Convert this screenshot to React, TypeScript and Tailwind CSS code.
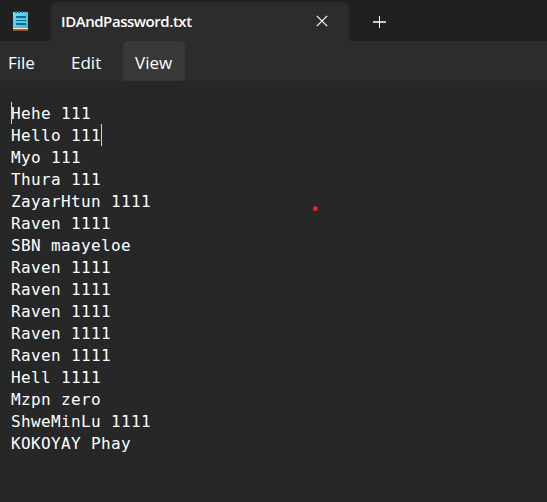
const lines = [
  'Hehe 111',
  'Hello 111',
  'Myo 111',
  'Thura 111',
  'ZayarHtun 1111',
  'Raven 1111',
  'SBN maayeloe',
  'Raven 1111',
  'Raven 1111',
  'Raven 1111',
  'Raven 1111',
  'Raven 1111',
  'Hell 1111',
  'Mzpn zero',
  'ShweMinLu 1111',
  'KOKOYAY Phay',
];

function NotepadIcon() {
  return (
    <svg width="16" height="21" viewBox="0 0 16 21" shapeRendering="crispEdges">
      <defs>
        <linearGradient id="paper" x1="0" y1="0" x2="1" y2="1">
          <stop offset="0" stopColor="#7fdcf5" />
          <stop offset="1" stopColor="#3fb4da" />
        </linearGradient>
      </defs>
      <rect x="0" y="18" width="15" height="2" fill="#b85a10" />
      <rect x="1" y="19" width="14" height="1" fill="#a04c0a" />
      <rect x="0" y="1" width="15" height="16" fill="url(#paper)" />
      <rect x="0" y="17" width="15" height="1" fill="#e8eef0" />
      <path d="M2 0h2v2h-2zM5 0h2v2h-2zM9 0h1v2h-1zM12 0h1v2h-1z" fill="#0c6a90" />
      <path d="M3 5h10v2h-10zM3 9h10v1h-10zM3 12h10v2h-10z" fill="#0a6d95" />
    </svg>
  );
}

function TitleBar() {
  return (
    <header className="flex h-[41px] bg-[#202020]">
      <div className="w-[51px] pl-[13px] pt-[11px]">
        <NotepadIcon />
      </div>
      <div className="relative mt-[2px] flex h-[39px] w-[298px] rounded-t-[8px] bg-[#2c2c2c]">
        <svg className="absolute -left-1 bottom-0" width="4" height="4">
          <path d="M4 0v4H0Q4 4 4 0" fill="#2c2c2c" />
        </svg>
        <svg className="absolute -right-1 bottom-0" width="4" height="4">
          <path d="M0 0v4H4Q0 4 0 0" fill="#2c2c2c" />
        </svg>
        <span className="ml-[10px] mt-[7px] w-[200px] font-['Open_Sans',sans-serif] text-[15px] font-semibold leading-[24px] tracking-[-0.45px] text-white">
          IDAndPassword.txt
        </span>
        <svg className="ml-[55px] mt-[13px]" width="12" height="12" viewBox="0 0 12 12">
          <path d="M.8.8l10.4 10.4M11.2.8L.8 11.2" stroke="#fff" strokeWidth="1.2" />
        </svg>
      </div>
      <svg className="ml-[24px] mt-[16px]" width="13" height="13" viewBox="0 0 13 13">
        <path d="M0 6h13" stroke="#c8c8c8" strokeWidth="2" />
        <path d="M6.5 0v12" stroke="#fff" strokeWidth="1" />
      </svg>
    </header>
  );
}

function MenuBar() {
  return (
    <nav className="flex h-[40px] bg-[#2c2c2c] font-['Open_Sans',sans-serif] text-[17px] leading-[43px] text-white">
      <span className="w-[71px] pl-[8px]">File</span>
      <span className="w-[52px]">Edit</span>
      <span className="w-[62px] rounded-[5px] bg-[#383838] pl-[12px]">View</span>
    </nav>
  );
}

export default function App() {
  return (
    <div className="flex h-[502px] w-[547px] flex-col overflow-hidden bg-[#272727]">
      <TitleBar />
      <MenuBar />
      <main className="relative grow pl-[11px] pt-[22px] font-['DejaVu_Sans_Mono',monospace] text-[16px] leading-[22px] tracking-[0.367px] text-white">
        {lines.map((line, i) => (
          <div key={i} className="h-[22px] whitespace-pre">{line}</div>
        ))}
        <i className="absolute left-[11px] top-[21px] h-[22px] w-px bg-[#d4d4d4]" />
        <i className="absolute left-[101px] top-[43px] h-[22px] w-px bg-[#d4d4d4]" />
        <i className="absolute left-[313px] top-[125px] size-[5px] rounded-full bg-[#f01c24]" />
      </main>
    </div>
  );
}
